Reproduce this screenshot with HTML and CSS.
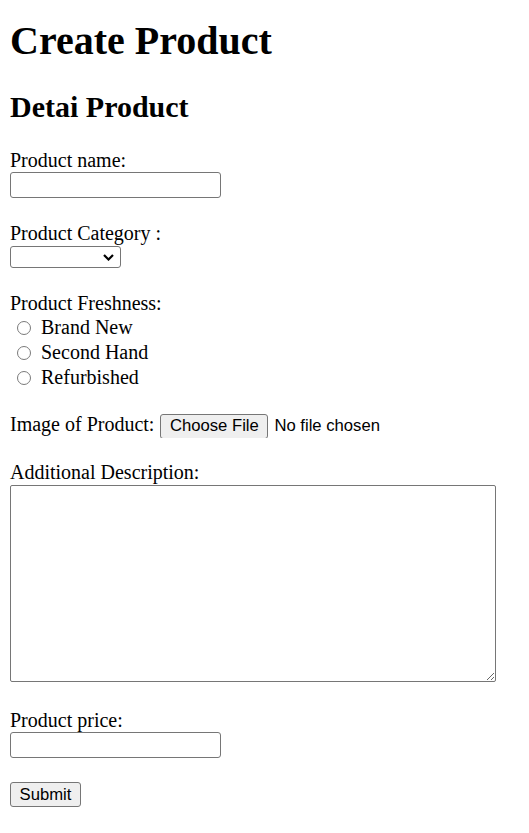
FILE: index.html
```
<!DOCTYPE html>
<html>
<head>
<meta charset="utf-8">
<title>Create Product</title>
<link rel="stylesheet" href="styles.css">
</head>
<body>
<h1>Create Product</h1>
<h2>Detai Product</h2>
<form class="form">
  <div class="field field-name">
    <label for="name">Product name:</label>
    <input type="text" id="name" class="text-field">
  </div>
  <div class="field field-category">
    <label for="category">Product Category :</label>
    <select id="category" class="category"><option></option></select>
  </div>
  <div class="field">
    <label>Product Freshness:</label>
    <div class="radios">
      <label class="radio-row"><input type="radio" name="fresh" class="radio"><span>Brand New</span></label>
      <label class="radio-row"><input type="radio" name="fresh" class="radio"><span>Second Hand</span></label>
      <label class="radio-row"><input type="radio" name="fresh" class="radio"><span>Refurbished</span></label>
    </div>
  </div>
  <div class="field">
    <div class="file-row">
      <label for="image">Image of Product:</label>
      <input type="file" id="image" class="file">
    </div>
  </div>
  <div class="field field-desc">
    <label for="desc">Additional Description:</label>
    <textarea id="desc" class="desc"></textarea>
  </div>
  <div class="field field-price">
    <label for="price">Product price:</label>
    <input type="text" id="price" class="text-field">
  </div>
  <div class="field">
    <button type="button" class="btn submit">Submit</button>
  </div>
</form>
</body>
</html>
```
FILE: styles.css
```
html, body {
  background: #fff;
}
body {
  margin: 0 10px;
  font-family: "Liberation Serif", "Times New Roman", serif;
  font-size: 20px;
  line-height: 23px;
  color: #000;
}
h1 {
  font-size: 40px;
  line-height: normal;
  font-weight: bold;
  margin: 17px 0 0;
}
h2 {
  font-size: 30px;
  line-height: normal;
  font-weight: bold;
  margin: 26px 0 25px;
}
.form {
  display: flex;
  flex-direction: column;
  align-items: flex-start;
  gap: 23px;
}
.field {
  display: flex;
  flex-direction: column;
  align-items: flex-start;
}
.field-name,
.field-category {
  margin-bottom: 1px;
}
.field-desc {
  margin-bottom: 4px;
}
.field-price {
  margin-bottom: 0;
}
.text-field {
  width: 211px;
  height: 26px;
  box-sizing: border-box;
  margin: 0;
  padding: 1px 3px;
  border: 1px solid #767676;
  border-radius: 3px;
  font-family: "Liberation Sans", Arial, sans-serif;
  font-size: 16.67px;
  background: #fff;
}
.category {
  appearance: none;
  -webkit-appearance: none;
  width: 111px;
  height: 22px;
  box-sizing: border-box;
  margin: 1px 0 0;
  padding: 0 4px;
  font-family: "Liberation Sans", Arial, sans-serif;
  font-size: 16.67px;
  border: 1px solid #767676;
  border-radius: 3px;
  background-color: #fff;
  background-image: url("data:image/svg+xml,%3Csvg xmlns='http://www.w3.org/2000/svg' width='11' height='7' viewBox='0 0 11 7'%3E%3Cpath d='M1 1l4.5 4.5L10 1' fill='none' stroke='%23000' stroke-width='2.2'/%3E%3C/svg%3E");
  background-repeat: no-repeat;
  background-position: right 6px center;
  color: #000;
}
.radios {
  display: flex;
  flex-direction: column;
}
.radio-row {
  display: flex;
  align-items: center;
  height: 25px;
  line-height: 25px;
}
.radio {
  appearance: none;
  -webkit-appearance: none;
  box-sizing: border-box;
  width: 14px;
  height: 14px;
  margin: 0 10px 0 7px;
  border: 1px solid #7a7a7a;
  border-radius: 50%;
  background: #fff;
}
.file-row {
  display: flex;
  align-items: flex-start;
  gap: 6px;
}
.file {
  font-family: "Liberation Sans", Arial, sans-serif;
  font-size: 16.67px;
  line-height: 25px;
  height: 25px;
  color: #000;
}
.file::file-selector-button {
  font-family: "Liberation Sans", Arial, sans-serif;
  font-size: 16.67px;
  height: 25px;
  width: 108px;
  padding: 0;
  margin: 0 6px 0 0;
  background: #efefef;
  color: #000;
  border: 1px solid #767676;
  border-radius: 3px;
}
.desc {
  width: 486px;
  height: 197px;
  box-sizing: border-box;
  margin: 1px 0 0;
  border: 1px solid #767676;
  border-radius: 2px;
  font-family: "Liberation Mono", monospace;
  font-size: 16.67px;
}
.btn {
  font-family: "Liberation Sans", Arial, sans-serif;
  font-size: 16.67px;
  background: #efefef;
  color: #000;
  border: 1px solid #767676;
  border-radius: 3px;
  padding: 0;
  margin: 1px 0 0;
}
.submit {
  width: 71px;
  height: 25px;
}
```
